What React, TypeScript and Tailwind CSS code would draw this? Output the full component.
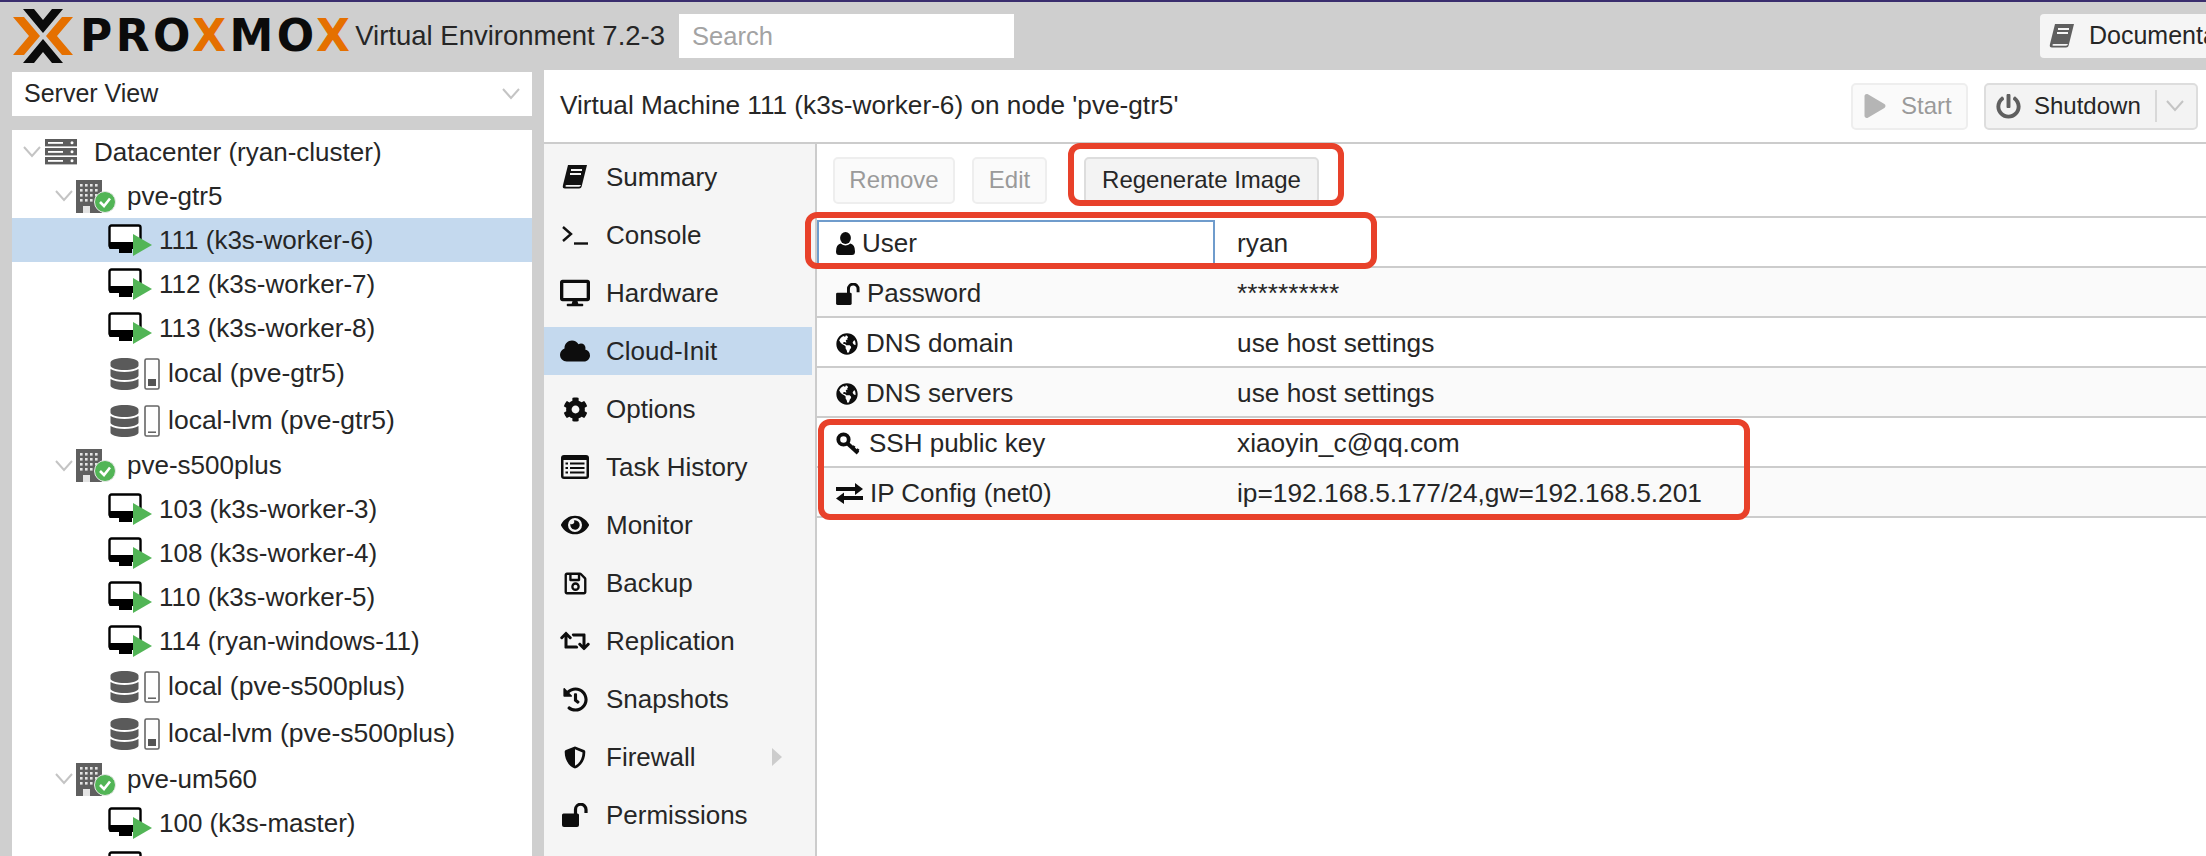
import React from "react";
import { FaCloud, FaCog, FaDatabase, FaDesktop, FaEye, FaGlobeAmericas, FaHistory, FaPlay, FaPowerOff, FaRegSave, FaRetweet, FaShieldAlt } from "react-icons/fa";

const font = "font-['Liberation_Sans',sans-serif]";

function Chevron({ className = "" }: { className?: string }) {
  return (
    <svg width="18" height="12" viewBox="0 0 18 12" className={"shrink-0 " + className} fill="none" stroke="#c4c4c4" strokeWidth="2">
      <path d="M1 1 L9 10 L17 1" />
    </svg>
  );
}

function Book({ color = "#111", size = 26 }: { color?: string; size?: number }) {
  return (
    <svg width={size} height={size} viewBox="0 0 26 26" className="shrink-0">
      <path d="M6 1 H25 L20 21 Q19.5 24.5 17 24.5 H3 Q0 24.5 1 21 Z" fill={color} />
      <path d="M3.5 21.6 Q3 22.8 4.5 22.8 H17 Q18.5 22.8 19 21 H4.5 Z" fill="#f5f5f5" />
      <path d="M9 6 H20 M8 10 H19" stroke="#f5f5f5" strokeWidth="2" />
    </svg>
  );
}

function Terminal() {
  return (
    <svg width="28" height="22" viewBox="0 0 28 22" fill="none" stroke="#111" strokeWidth="2.4">
      <path d="M2 3 L10 10 L2 17" />
      <path d="M13 19.5 H27" />
    </svg>
  );
}

function Unlock({ w = 26, h = 24 }: { w?: number; h?: number }) {
  return (
    <svg width={w} height={h} viewBox="0 0 26 24" fill="currentColor">
      <path d="M0 12 Q0 10.5 1.5 10.5 H15.5 Q17 10.5 17 12 V22 Q17 24 15 24 H2 Q0 24 0 22 Z" />
      <path d="M13.5 11 V6.5 A5 5 0 0 1 24 6.5 V10" fill="none" stroke="currentColor" strokeWidth="3.2" />
    </svg>
  );
}

function User() {
  return (
    <svg width="19" height="23" viewBox="0 0 19 23" fill="currentColor">
      <ellipse cx="9.5" cy="6" rx="5.4" ry="6" />
      <path d="M0 19.5 Q0 12.5 4.6 11.5 Q9.5 15.5 14.4 11.5 Q19 12.5 19 19.5 Q19 23 16 23 H3 Q0 23 0 19.5 Z" />
    </svg>
  );
}

function Key() {
  return (
    <svg width="24" height="24" viewBox="0 0 24 24" fill="none" stroke="currentColor">
      <circle cx="7.5" cy="7.5" r="5.2" strokeWidth="3.8" />
      <path d="M11 11 L22 21" strokeWidth="3.8" />
      <path d="M18.5 14 L16 17 M22.5 17 L20 20" strokeWidth="2.6" />
    </svg>
  );
}

function Exchange() {
  return (
    <svg width="27" height="21" viewBox="0 0 27 21" fill="currentColor">
      <path d="M0 4 H19 V0 L27 6 L19 12 V8 H0 Z" />
      <path d="M27 13 H8 V9.5 L0 15.5 L8 21 V17 H27 Z" />
    </svg>
  );
}

function ListAlt() {
  return (
    <svg width="28" height="24" viewBox="0 0 28 24">
      <rect x="0" y="0" width="28" height="24" rx="3" fill="#0d0d0d" />
      <rect x="2.5" y="5" width="23" height="16.5" fill="#f5f5f5" />
      <path d="M4.5 8.5 H7 M9 8.5 H23.5 M4.5 13 H7 M9 13 H23.5 M4.5 17.5 H7 M9 17.5 H23.5" stroke="#0d0d0d" strokeWidth="2.2" />
    </svg>
  );
}

function VmIcon() {
  return (
    <svg width="44" height="32" viewBox="0 0 44 32" className="shrink-0">
      <rect x="1.5" y="1.5" width="31" height="22" rx="2" fill="#fff" stroke="#000" strokeWidth="2.4" />
      <rect x="1" y="18" width="32" height="7" rx="1.5" fill="#000" />
      <rect x="11" y="25" width="13" height="4" fill="#000" />
      <path d="M25 10 L44 21 L25 32 Z" fill="#52b556" />
    </svg>
  );
}

function NodeIcon() {
  return (
    <svg width="40" height="33" viewBox="0 0 40 33" className="shrink-0">
      <rect x="0" y="0" width="26" height="33" fill="#5f5f5f" />
      <g fill="#e4e4e4">
        {[4, 9, 14, 19].map((y) =>
          [4, 9, 14, 19].map((x) => <rect key={x + "-" + y} x={x} y={y} width="2.6" height="2.6" />)
        )}
        <rect x="7" y="26" width="7" height="7" />
      </g>
      <circle cx="29" cy="22" r="10.5" fill="#52b556" stroke="#e8e8e8" strokeWidth="1" />
      <path d="M24 22 L28 26 L34 18.5" fill="none" stroke="#fff" strokeWidth="2.6" />
    </svg>
  );
}

function DatacenterIcon() {
  return (
    <svg width="32" height="26" viewBox="0 0 32 26" className="shrink-0">
      {[0, 9, 18].map((y) => (
        <g key={y}>
          <rect x="0" y={y} width="32" height="7.4" fill="#5c5c5c" />
          <rect x="3" y={y + 3} width="15" height="1.8" fill="#fff" />
          <circle cx="27" cy={y + 3.7} r="1.5" fill="#fff" />
        </g>
      ))}
    </svg>
  );
}

function StorageIcon({ full }: { full: boolean }) {
  return (
    <span className="flex shrink-0 items-center gap-[5px]">
      <FaDatabase className="h-[32px] w-[29px] text-[#5a5a5a]" />
      <svg width="16" height="32" viewBox="0 0 16 32">
        <rect x="1" y="1" width="14" height="30" rx="1.5" fill="#fff" stroke="#666" strokeWidth="1.6" />
        {full ? <rect x="4" y="21" width="8" height="7" fill="#555" /> : <rect x="4" y="26.5" width="8" height="1.4" fill="#555" />}
      </svg>
    </span>
  );
}

type Tree =
  | { kind: "dc" | "node" | "vm"; label: string; selected?: boolean; tight?: boolean }
  | { kind: "st"; label: string; full: boolean };

const tree: Tree[] = [
  { kind: "dc", label: "Datacenter (ryan-cluster)" },
  { kind: "node", label: "pve-gtr5" },
  { kind: "vm", label: "111 (k3s-worker-6)", selected: true },
  { kind: "vm", label: "112 (k3s-worker-7)" },
  { kind: "vm", label: "113 (k3s-worker-8)" },
  { kind: "st", label: "local (pve-gtr5)", full: true },
  { kind: "st", label: "local-lvm (pve-gtr5)", full: false },
  { kind: "node", label: "pve-s500plus", tight: true },
  { kind: "vm", label: "103 (k3s-worker-3)" },
  { kind: "vm", label: "108 (k3s-worker-4)" },
  { kind: "vm", label: "110 (k3s-worker-5)" },
  { kind: "vm", label: "114 (ryan-windows-11)" },
  { kind: "st", label: "local (pve-s500plus)", full: false },
  { kind: "st", label: "local-lvm (pve-s500plus)", full: true },
  { kind: "node", label: "pve-um560" },
  { kind: "vm", label: "100 (k3s-master)" },
  { kind: "vm", label: "101 (k3s-worker-1)" },
];

function TreeRow({ item }: { item: Tree }) {
  if (item.kind === "dc")
    return (
      <div className="flex h-[44px] shrink-0 items-center pl-[11px]">
        <Chevron />
        <span className="ml-[4px]"><DatacenterIcon /></span>
        <span className="ml-[17px] whitespace-nowrap">{item.label}</span>
      </div>
    );
  if (item.kind === "node")
    return (
      <div className={"flex shrink-0 items-center pl-[43px] " + (item.tight ? "h-[43px]" : "h-[44px]")}>
        <Chevron />
        <span className="ml-[3px]"><NodeIcon /></span>
        <span className="ml-[11px] whitespace-nowrap">{item.label}</span>
      </div>
    );
  if (item.kind === "vm")
    return (
      <div className={"flex h-[44px] shrink-0 items-center pl-[96px] " + (item.selected ? "bg-[#c4d9ee]" : "")}>
        <VmIcon />
        <span className="ml-[7px] whitespace-nowrap">{item.label}</span>
      </div>
    );
  return (
    <div className="flex h-[47px] shrink-0 items-center pl-[98px] text-[26.5px]">
      <StorageIcon full={item.full} />
      <span className="ml-[8px] whitespace-nowrap">{item.label}</span>
    </div>
  );
}

const nav: { label: string; icon: React.ReactNode; selected?: boolean; arrow?: boolean }[] = [
  { label: "Summary", icon: <Book /> },
  { label: "Console", icon: <Terminal /> },
  { label: "Hardware", icon: <FaDesktop className="h-[28px] w-[30px]" /> },
  { label: "Cloud-Init", icon: <FaCloud className="h-[28px] w-[30px]" />, selected: true },
  { label: "Options", icon: <FaCog className="h-[25px] w-[25px]" /> },
  { label: "Task History", icon: <ListAlt /> },
  { label: "Monitor", icon: <FaEye className="h-[26px] w-[28px]" /> },
  { label: "Backup", icon: <FaRegSave className="h-[25px] w-[25px]" /> },
  { label: "Replication", icon: <FaRetweet className="h-[26px] w-[30px]" /> },
  { label: "Snapshots", icon: <FaHistory className="h-[25px] w-[25px]" /> },
  { label: "Firewall", icon: <FaShieldAlt className="h-[25px] w-[22px]" />, arrow: true },
  { label: "Permissions", icon: <Unlock /> },
];

const rows: { label: string; value: string; icon: React.ReactNode; gap: string; alt?: boolean; focus?: boolean }[] = [
  { label: "User", value: "ryan", icon: <User />, gap: "ml-[7px]", focus: true },
  { label: "Password", value: "**********", icon: <Unlock w={24} h={22} />, gap: "ml-[7px]", alt: true },
  { label: "DNS domain", value: "use host settings", icon: <FaGlobeAmericas className="h-[22px] w-[22px]" />, gap: "ml-[8px]" },
  { label: "DNS servers", value: "use host settings", icon: <FaGlobeAmericas className="h-[22px] w-[22px]" />, gap: "ml-[8px]", alt: true },
  { label: "SSH public key", value: "xiaoyin_c@qq.com", icon: <Key />, gap: "ml-[9px]" },
  { label: "IP Config (net0)", value: "ip=192.168.5.177/24,gw=192.168.5.201", icon: <Exchange />, gap: "ml-[7px]", alt: true },
];

function Logo() {
  return (
    <div className="flex items-center">
      <svg width="60" height="54" viewBox="0 0 60 54" className="shrink-0">
        <path d="M0 8 H11 L27 27 L11 46 H0 L16 27 Z" fill="#e57000" />
        <path d="M60 8 H49 L33 27 L49 46 H60 L44 27 Z" fill="#e57000" />
        <path d="M10 0 H21 L30 11 L39 0 H50 L30 24 Z" fill="#0b0b0b" />
        <path d="M10 54 H21 L30 43 L39 54 H50 L30 30 Z" fill="#0b0b0b" />
      </svg>
      <span className="ml-[7px] whitespace-nowrap font-['DejaVu_Sans',sans-serif] text-[44px] font-bold leading-none tracking-[3.4px] text-[#0b0b0b]">
        PRO<span className="text-[#e57000]">X</span>MO<span className="text-[#e57000]">X</span>
      </span>
    </div>
  );
}

export default function App() {
  return (
    <div className={"relative flex h-[856px] w-[2206px] flex-col overflow-hidden border-t-2 border-[#3a2e6e] bg-[#cfcfcf] text-[26px] text-[#262626] " + font}>
      <header className="flex h-[68px] shrink-0 items-center pl-[13px]">
        <Logo />
        <span className="ml-[2px] whitespace-nowrap text-[27.5px]">Virtual Environment 7.2-3</span>
        <div className="ml-[14px] flex h-[44px] w-[335px] items-center bg-white pl-[13px] text-[25.5px] text-[#a3a3a3]">Search</div>
        <div className="ml-auto flex h-[44px] w-[166px] items-center gap-[14px] self-center overflow-hidden rounded-l-[4px] bg-[#f5f5f5] pl-[9px] text-[25px]">
          <Book color="#5f5f5f" />
          <span className="whitespace-nowrap">Documentation</span>
        </div>
      </header>
      <div className="flex min-h-0 flex-1">
        <aside className="flex w-[544px] shrink-0 flex-col px-[12px] pt-[2px]">
          <div className="flex h-[44px] shrink-0 items-center justify-between bg-white pl-[12px] pr-[12px] text-[25px]">
            <span>Server View</span>
            <Chevron />
          </div>
          <div className="mt-[14px] flex min-h-0 flex-1 flex-col overflow-hidden bg-white">
            {tree.map((t) => (
              <TreeRow key={t.label} item={t} />
            ))}
          </div>
        </aside>
        <main className="flex min-w-0 flex-1 flex-col bg-white">
          <div className="flex h-[74px] shrink-0 items-center border-b-2 border-[#cccccc] pl-[16px] pr-[8px]">
            <span className="whitespace-nowrap text-[26.2px]">Virtual Machine 111 (k3s-worker-6) on node 'pve-gtr5'</span>
            <div className="ml-auto flex h-[47px] w-[117px] items-center gap-[15px] rounded-[5px] border-2 border-[#eeeeee] bg-[#fafafa] pl-[11px] text-[24px] text-[#9a9a9a]">
              <FaPlay className="h-[24px] w-[22px] text-[#b5b5b5]" />
              <span>Start</span>
            </div>
            <div className="ml-[16px] flex h-[47px] w-[214px] items-center rounded-[5px] border-2 border-[#dddddd] bg-[#f3f3f3] pl-[10px] text-[24px]">
              <FaPowerOff className="h-[25px] w-[25px] text-[#5f5f5f]" />
              <span className="ml-[13px]">Shutdown</span>
              <span className="ml-[14px] h-[32px] w-[2px] bg-[#d8d8d8]" />
              <Chevron className="ml-[9px]" />
            </div>
          </div>
          <div className="flex min-h-0 flex-1">
            <nav className="flex w-[273px] shrink-0 flex-col gap-[10px] border-r-2 border-[#cccccc] bg-[#f5f5f5] pr-[3px] pt-[9px]">
              {nav.map((n) => (
                <div key={n.label} className={"flex h-[48px] shrink-0 items-center " + (n.selected ? "bg-[#c4d9ee]" : "")}>
                  <span className="flex w-[62px] shrink-0 items-center justify-center text-[#0d0d0d]">{n.icon}</span>
                  <span className="whitespace-nowrap">{n.label}</span>
                  {n.arrow && <span className="ml-auto mr-[30px] h-0 w-0 border-y-[9px] border-l-[10px] border-y-transparent border-l-[#cccccc]" />}
                </div>
              ))}
            </nav>
            <section className="flex min-w-0 flex-1 flex-col">
              <div className="flex h-[74px] shrink-0 items-center gap-[17px] border-b-2 border-[#cccccc] pl-[16px] text-[24px]">
                <div className="flex h-[47px] w-[122px] items-center justify-center rounded-[5px] border-2 border-[#eeeeee] bg-[#fafafa] text-[#9a9a9a]">Remove</div>
                <div className="flex h-[47px] w-[75px] items-center justify-center rounded-[5px] border-2 border-[#eeeeee] bg-[#fafafa] text-[#9a9a9a]">Edit</div>
                <div className="ml-[20px] flex h-[47px] w-[235px] items-center justify-center rounded-[5px] border-2 border-[#dddddd] bg-[#f3f3f3]">Regenerate Image</div>
              </div>
              {rows.map((r) => (
                <div key={r.label} className={"relative flex h-[50px] shrink-0 items-center border-b-2 border-[#cccccc] pt-[3px] " + (r.alt ? "bg-[#fafafa]" : "")}>
                  <div className="flex w-[420px] shrink-0 items-center pl-[19px]">
                    <span className="flex items-center text-[#0d0d0d]">{r.icon}</span>
                    <span className={"whitespace-nowrap " + r.gap}>{r.label}</span>
                  </div>
                  <span className="whitespace-nowrap text-[26.3px]">{r.value}</span>
                  {r.focus && <span className="absolute left-0 top-[2px] h-[45px] w-[398px] border-2 border-b-0 border-[#6f9ccc]" />}
                </div>
              ))}
            </section>
          </div>
        </main>
      </div>
      <div className="absolute left-[1068px] top-[141px] h-[63px] w-[276px] rounded-[12px] border-[6px] border-[#e8412a]" />
      <div className="absolute left-[805px] top-[210px] h-[57px] w-[572px] rounded-[12px] border-[6px] border-[#e8412a]" />
      <div className="absolute left-[818px] top-[417px] h-[101px] w-[932px] rounded-[12px] border-[6px] border-[#e8412a]" />
    </div>
  );
}
